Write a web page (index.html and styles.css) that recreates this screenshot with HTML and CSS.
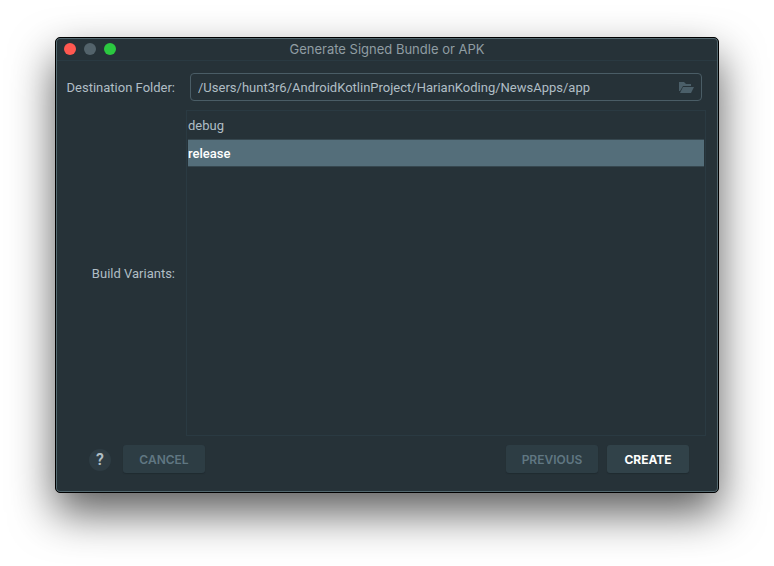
FILE: index.html
```html
<!DOCTYPE html>
<html lang="en">
<head>
<meta charset="utf-8">
<title>Generate Signed Bundle or APK</title>
<link rel="stylesheet" href="styles.css">
</head>
<body>
<main class="window">
  <header class="titlebar">
    <div class="lights">
      <button class="light close" type="button" aria-label="Close"></button>
      <button class="light minimize" type="button" aria-label="Minimize" disabled></button>
      <button class="light zoom" type="button" aria-label="Zoom"></button>
    </div>
    <h1 class="title">Generate Signed Bundle or APK</h1>
  </header>
  <form class="form">
    <div class="fields">
      <label class="label" for="folder">Destination Folder:</label>
      <div class="path">
        <input class="path-input" id="folder" type="text" value="/Users/hunt3r6/AndroidKotlinProject/HarianKoding/NewsApps/app" spellcheck="false">
        <button class="browse" type="button" aria-label="Browse">
          <svg class="folder" viewBox="0 0 16 12" aria-hidden="true">
            <path d="M1 1h5l2 2h5v2H5L2 10H1z"/>
            <path d="M5 6h11l-3 6H2z"/>
          </svg>
        </button>
      </div>
      <label class="label" for="variants">Build Variants:</label>
      <select class="variants" id="variants" size="4">
        <option>debug</option>
        <option selected>release</option>
      </select>
    </div>
    <footer class="actions">
      <button class="help" type="button" aria-label="Help">?</button>
      <button class="button" type="button">CANCEL</button>
      <span class="spacer"></span>
      <button class="button previous" type="button">PREVIOUS</button>
      <button class="button primary" type="submit">CREATE</button>
    </footer>
  </form>
</main>
</body>
</html>
```
FILE: styles.css
```css
* {
  box-sizing: border-box;
}

body {
  display: flex;
  min-height: 100vh;
  margin: 0;
  padding: 37px 55px 73px;
  background: #fff;
  color: #b0bec5;
  font: 13px/16px Roboto, "Liberation Sans", sans-serif;
}

button,
input,
select {
  margin: 0;
  padding: 0;
  border: 0;
  background: none;
  color: inherit;
  font: inherit;
  outline: 0;
}

.window {
  display: flex;
  flex: 1;
  flex-direction: column;
  border: 1px solid #000;
  border-radius: 5px;
  background: #263238;
  box-shadow: inset 0 0 0 1px #546970, 0 20px 44px rgba(0, 0, 0, 0.64);
}

.titlebar {
  display: grid;
  grid-template-columns: 1fr auto 1fr;
  align-items: center;
  height: 23px;
  margin: 0 1px;
  padding: 0 7px;
  border-bottom: 1px solid #2a3a42;
}

.lights {
  display: flex;
  gap: 8px;
}

.light {
  width: 12px;
  height: 12px;
  border-radius: 50%;
}

.close {
  background: #ff5850;
}

.minimize {
  background: #53636b;
}

.zoom {
  background: #2bc840;
}

.title {
  margin: 0;
  color: #909da3;
  font-family: Inter, "Liberation Sans", sans-serif;
  font-size: 13px;
  font-weight: 400;
}

.form {
  display: flex;
  flex: 1;
  flex-direction: column;
  padding: 12px 12px 19px;
}

.fields {
  display: grid;
  flex: 1;
  grid-template-columns: 107px 1fr;
  grid-template-rows: 28px 1fr;
  gap: 9px 11px;
  align-items: center;
}

.label {
  display: flex;
  justify-content: flex-end;
  padding-top: 2px;
  white-space: nowrap;
}

.path {
  display: flex;
  align-items: center;
  height: 28px;
  margin: 0 4px;
  padding: 0 7px;
  border: 1px solid #4a5d66;
  border-radius: 4px;
}

.path-input {
  flex: 1;
  min-width: 0;
  padding-top: 2px;
}

.browse {
  display: flex;
}

.folder {
  width: 16px;
  height: 12px;
  fill: #4b5f69;
}

.variants {
  align-self: stretch;
  height: 100%;
  padding: 0 1px;
  border: 1px solid #2a3a42;
  border-radius: 0;
  overflow: hidden;
}

.variants option {
  min-height: 28px;
  padding: 7px 0 5px;
  border-radius: 0;
}

.variants option:checked {
  background: #546e7a linear-gradient(#546e7a, #546e7a);
  box-shadow: inset 0 1px #36474f, inset 0 -1px #36474f;
  color: #fff;
  font-weight: 500;
}

.actions {
  display: flex;
  align-items: center;
  margin-top: 9px;
  padding: 0 17px 0 21px;
}

.help {
  width: 22px;
  height: 22px;
  margin-top: 2px;
  margin-right: 12px;
  border-radius: 50%;
  background: #2e3c43;
  font-size: 16px;
  font-weight: 600;
}

.button {
  width: 82px;
  height: 28px;
  padding-top: 2px;
  border-radius: 3px;
  background: #2d3d44;
  box-shadow: 0 1px 1px #202b30;
  color: #607782;
  font-family: Inter, "Liberation Sans", sans-serif;
  font-size: 12px;
  font-weight: 600;
}

.spacer {
  flex: 1;
}

.previous {
  width: 92px;
  margin-right: 9px;
}

.primary {
  background: #314249;
  color: #fff;
  font-weight: 700;
}
```
